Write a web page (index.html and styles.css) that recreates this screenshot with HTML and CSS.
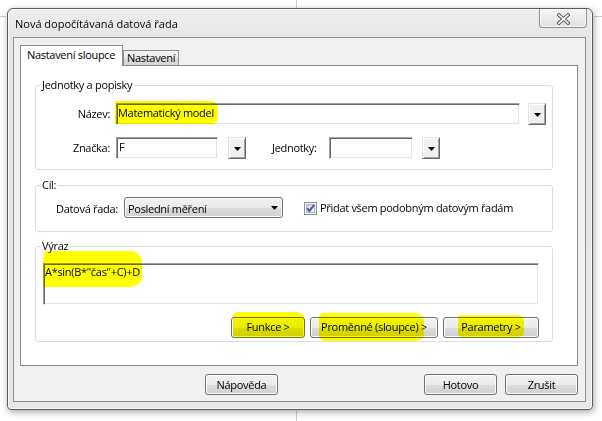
FILE: index.html
```html
<!DOCTYPE html>
<html lang="cs">
<head>
<meta charset="utf-8">
<title>Nová dopočítávaná datová řada</title>
<link rel="stylesheet" href="styles.css">
</head>
<body>
<div class="window">
  <div class="titlebar">
    <span class="title">Nová dopočítávaná datová řada</span>
    <button class="close" aria-label="Zavřít">
      <svg width="13" height="12" viewBox="0 0 13 12"><path d="M2 2L11 10M11 2L2 10" stroke="#5a5a5a" stroke-width="3.6" stroke-linecap="square" fill="none"/><path d="M2 2L11 10M11 2L2 10" stroke="#ffffff" stroke-width="1.6" stroke-linecap="square" fill="none"/></svg>
    </button>
  </div>
  <div class="client">
    <div class="tabs">
      <div class="tabstrip">
        <div class="tab active">Nastavení sloupce</div>
        <div class="tab">Nastavení</div>
      </div>
      <div class="panel">
        <div class="group g-units">
          <div class="caption">Jednotky a popisky</div>
          <div class="row r1">
            <span class="lbl">Název:</span>
            <div class="edit e-name"><span class="hl hl-name">Matematický model</span></div>
            <span class="ddbtn"><svg width="7" height="4" viewBox="0 0 7 4"><path d="M0 0H7L3.5 4Z" fill="#000"/></svg></span>
          </div>
          <div class="row r2">
            <span class="lbl">Značka:</span>
            <div class="edit e-sym"><span class="val">F</span></div>
            <span class="ddbtn"><svg width="7" height="4" viewBox="0 0 7 4"><path d="M0 0H7L3.5 4Z" fill="#000"/></svg></span>
            <span class="lbl2">Jednotky:</span>
            <div class="edit e-unit"></div>
            <span class="ddbtn"><svg width="7" height="4" viewBox="0 0 7 4"><path d="M0 0H7L3.5 4Z" fill="#000"/></svg></span>
          </div>
        </div>
        <div class="group g-target">
          <div class="caption">Cíl:</div>
          <div class="row r3">
            <span class="lbl3">Datová řada:</span>
            <div class="combo"><span class="ctext">Poslední měření</span><svg width="7" height="4" viewBox="0 0 7 4"><path d="M0 0H7L3.5 4Z" fill="#000"/></svg></div>
            <span class="check">
              <svg width="13" height="13" viewBox="0 0 13 13">
                <defs><linearGradient id="cbg" x1="0" y1="0" x2="1" y2="1"><stop offset="0" stop-color="#c9ced6"/><stop offset="1" stop-color="#f7f7f7"/></linearGradient></defs>
                <rect x="0.5" y="0.5" width="12" height="12" fill="#f4f4f4" stroke="#8e8f8f"/>
                <rect x="2.5" y="2.5" width="8" height="8" fill="url(#cbg)" stroke="#b1b6bd"/>
                <path d="M3.2 6.4L5.4 8.9L10.2 2.9" fill="none" stroke="#44599a" stroke-width="1.9"/>
              </svg>
              <span>Přidat všem podobným datovým řadám</span>
            </span>
          </div>
        </div>
        <div class="group g-expr">
          <div class="caption">Výraz</div>
          <div class="memo"><span class="hl hl-expr">A*sin(B*"čas"+C)+D</span></div>
          <div class="btnrow">
            <button class="btn b-func hlbtn"><span class="btxt">Funkce &gt;</span></button>
            <button class="btn b-vars"><span class="btxt hl hl-vars">Proměnné (sloupce) &gt;</span></button>
            <button class="btn b-params"><span class="btxt hl hl-params">Parametry &gt;</span></button>
          </div>
        </div>
      </div>
    </div>
    <div class="footer">
      <button class="btn b-help">Nápověda</button>
      <button class="btn b-ok">Hotovo</button>
      <button class="btn b-cancel">Zrušit</button>
    </div>
  </div>
</div>
</body>
</html>
```
FILE: styles.css
```css
* { box-sizing: border-box; }
html, body { margin: 0; padding: 0; }
body {
  width: 602px;
  height: 421px;
  overflow: hidden;
  background:
    linear-gradient(#cdcdcd, #cdcdcd) 296px 0 / 1px 8px no-repeat,
    linear-gradient(#cdcdcd, #cdcdcd) 0 16px / 6px 1px no-repeat,
    linear-gradient(#cdcdcd, #cdcdcd) 594px 16px / 8px 1px no-repeat,
    linear-gradient(#cdcdcd, #cdcdcd) 296px 411px / 1px 10px no-repeat,
    #ffffff;
  font-family: "Open Sans", "Noto Sans", sans-serif;
  font-size: 11px;
  letter-spacing: -0.3px;
  color: #000;
}
button { font: inherit; letter-spacing: inherit; color: inherit; margin: 0; padding: 0; }

.window {
  margin: 8px 0 0 7px;
  width: 586px;
  height: 402px;
  border: 1px solid #5c5c5c;
  border-radius: 6px 6px 4px 4px;
  background: linear-gradient(#eeeeee, #e5e5e5 30px, #e7e7e7);
  box-shadow: inset 0 0 0 1px #f8f8f8, 1px 2px 7px rgba(0, 0, 0, 0.35);
  padding: 0 6px 7px 5px;
  display: flex;
  flex-direction: column;
}
.titlebar {
  flex: none;
  height: 28px;
  display: flex;
  align-items: flex-start;
}
.title {
  align-self: center;
  padding-left: 2px;
  padding-top: 1px;
  letter-spacing: 0;
}
.close {
  margin-left: auto;
  margin-right: -1px;
  width: 48px;
  height: 19px;
  border: 1px solid #8e8e8e;
  border-top: none;
  border-radius: 0 0 4px 4px;
  background: linear-gradient(#f6f6f6, #ebebeb 50%, #dedede);
  box-shadow: inset 0 -1px 0 #f9f9f9, inset 1px 0 0 #f9f9f9, inset -1px 0 0 #f9f9f9;
  display: flex;
  align-items: center;
  justify-content: center;
  padding-top: 1px;
}

.client {
  flex: 1;
  border: 1px solid #8e8f8f;
  background: #f0f0f0;
  padding: 7px 7px 6px 6px;
  display: flex;
  flex-direction: column;
}
.tabs {
  flex: 1;
  display: flex;
  flex-direction: column;
}
.tabstrip {
  height: 21px;
  margin-bottom: -1px;
  display: flex;
  align-items: flex-end;
  position: relative;
  z-index: 1;
}
.tab {
  border: 1px solid #898c95;
  border-bottom: none;
}
.tab.active {
  height: 21px;
  width: 103px;
  background: #fff;
  padding: 1px 0 0 6px;
  line-height: 16px;
}
.tab:not(.active) {
  height: 15px;
  width: 56px;
  margin-bottom: 1px;
  background: linear-gradient(#f3f3f3, #ebebeb 50%, #dddddd 51%, #d6d6d6);
  padding-left: 3px;
  line-height: 14px;
}
.panel {
  flex: 1;
  background: #fff;
  border: 1px solid #898c95;
  padding: 19px 24px 0 14px;
  display: flex;
  flex-direction: column;
}

.group {
  border: 1px solid #d5dfe5;
  border-radius: 3px;
  box-shadow: inset 1px 1px 0 #fff;
}
.caption {
  width: max-content;
  height: 14px;
  line-height: 14px;
  margin: -8px 0 -6px 4px;
  padding: 0 2px;
  background: #fff;
}
.g-units { height: 85px; }
.g-target { height: 47px; margin-top: 15px; }
.g-expr { height: 96px; margin-top: 14px; }

.row { display: flex; align-items: flex-start; }
.r1 { margin-top: 17px; height: 22px; }
.r2 { margin-top: 12px; height: 22px; }
.lbl {
  width: 80px;
  padding-right: 6px;
  text-align: right;
  line-height: 22px;
}
.lbl2 {
  width: 57px;
  margin-left: 26px;
  line-height: 22px;
}
.edit {
  height: 22px;
  border: 1px solid;
  border-color: #a0a0a0 #ffffff #ffffff #a0a0a0;
  box-shadow: inset 1px 1px 0 #696969, inset -1px -1px 0 #e3e3e3;
  background: #fff;
  padding: 1px 0 0 1px;
}
.e-name { width: 404px; }
.e-sym { width: 102px; padding-left: 2px; }
.e-unit { width: 84px; }
.val, .hl-name { display: inline-block; line-height: 16px; }
.ddbtn {
  width: 18px;
  height: 22px;
  margin-left: 8px;
  background: #f0f0f0;
  border: 1px solid;
  border-color: #e3e3e3 #696969 #696969 #e3e3e3;
  box-shadow: inset 1px 1px 0 #ffffff, inset -1px -1px 0 #a0a0a0;
  display: flex;
  align-items: center;
  justify-content: center;
  padding-top: 2px;
}
.r2 .ddbtn { margin-left: 10px; }
.r2 .e-unit + .ddbtn { margin-left: 9px; }

.r3 { margin-top: 11px; height: 21px; padding-left: 20px; }
.lbl3 { width: 68px; line-height: 23px; }
.combo {
  width: 159px;
  height: 21px;
  border: 1px solid #707070;
  border-radius: 3px;
  background: linear-gradient(#f2f2f2, #ebebeb 50%, #dddddd 51%, #cfcfcf);
  box-shadow: inset 0 0 0 1px #fcfcfc;
  display: flex;
  align-items: center;
  padding: 0 4px 0 3px;
}
.ctext { flex: 1; line-height: 19px; padding-top: 1px; }
.check {
  margin-left: 21px;
  display: flex;
  align-items: center;
  gap: 3px;
  height: 21px;
  line-height: 16px;
}
.check svg { margin-top: 1px; }

.memo {
  margin: 16px 0 0 7px;
  width: 496px;
  height: 42px;
  border: 1px solid;
  border-color: #a0a0a0 #ffffff #ffffff #a0a0a0;
  box-shadow: inset 1px 1px 0 #696969, inset -1px -1px 0 #e3e3e3;
  background: #fff;
  padding: 0 0 0 1px;
}
.hl-expr { display: inline-block; line-height: 16px; }

.btnrow {
  margin-top: 12px;
  padding-right: 13px;
  display: flex;
  justify-content: flex-end;
  gap: 5px;
}
.btn {
  height: 21px;
  border: 1px solid #707070;
  border-radius: 3px;
  background: linear-gradient(#f2f2f2, #ebebeb 50%, #dddddd 51%, #cfcfcf);
  box-shadow: inset 0 0 0 1px #fcfcfc;
  line-height: 19px;
  text-align: center;
  position: relative;
}
.btxt { display: inline-block; line-height: 16px; vertical-align: top; margin-top: 1px; }
.b-func { width: 74px; }
.b-vars { width: 128px; }
.b-params { width: 96px; }

.footer {
  flex: none;
  margin-top: 8px;
  display: flex;
}
.b-help { width: 73px; margin-left: 185px; }
.b-ok { width: 73px; margin-left: auto; }
.b-cancel { width: 73px; margin-left: 8px; }

/* marker highlights drawn over the content */
.hl, .hlbtn { position: relative; }
.hl::before, .hlbtn::before {
  content: "";
  position: absolute;
  background: #ffff00;
  mix-blend-mode: multiply;
  pointer-events: none;
}
.hl-name::before {
  left: -3px; right: -4px; top: -4px; bottom: -3px;
  border-radius: 1px 7px 6px 1px / 1px 8px 6px 1px;
}
.hl-expr::before {
  left: -2px; right: -2px; top: -13px; bottom: -7px;
  border-radius: 4px 12px 12px 3px / 8px 12px 10px 4px;
}
.hlbtn::before {
  left: 1px; right: 0; top: -6px; bottom: 0;
  border-radius: 6px 8px 2px 2px / 5px 5px 2px 2px;
}
.hl-vars::before {
  left: -2px; right: 3px; top: -6px; bottom: -6px;
  border-radius: 4px 10px 8px 6px / 6px 8px 6px 6px;
}
.hl-params::before {
  left: -3px; right: -3px; top: -4px; bottom: -2px;
  border-radius: 3px 6px 5px 4px;
}
```
